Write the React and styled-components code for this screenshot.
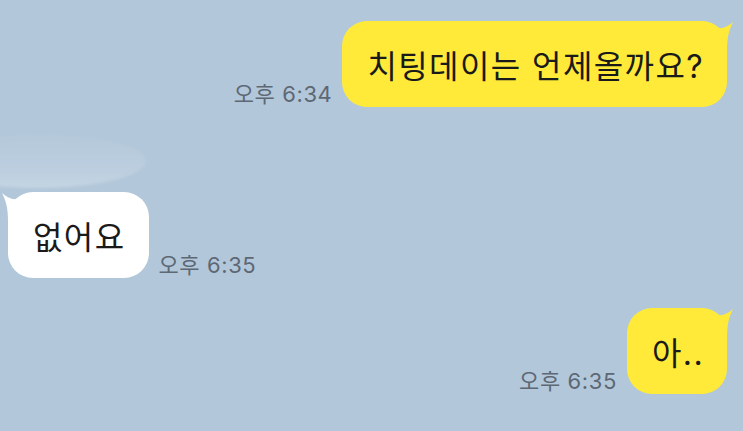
import React from "react";
import styled, { createGlobalStyle } from "styled-components";

const GlobalStyle = createGlobalStyle`
  html, body { margin: 0; padding: 0; }
  body { background: #b2c7da; }
`;

const Screen = styled.div`
  position: relative;
  width: 743px;
  height: 431px;
  overflow: hidden;
  background: #b2c7da;
  font-family: Inter, "Noto Sans CJK KR", sans-serif;
  display: flex;
  flex-direction: column;
`;

const Glare = styled.div`
  position: absolute;
  left: -70px;
  top: 134px;
  width: 216px;
  height: 54px;
  border-radius: 50%;
  background: linear-gradient(
    to bottom,
    rgba(255, 255, 255, 0.03) 0%,
    rgba(255, 255, 255, 0.12) 60%,
    rgba(255, 255, 255, 0.24) 100%
  );
  filter: blur(1.5px);
`;

const Row = styled.div`
  display: flex;
  align-items: flex-end;
  gap: 10px;
  justify-content: ${(p) => (p.$mine ? "flex-end" : "flex-start")};
  margin-top: ${(p) => p.$top}px;
  padding: ${(p) => (p.$mine ? "0 16px 0 0" : "0 0 0 8px")};
`;

const Bubble = styled.div`
  position: relative;
  height: 86px;
  padding: 0 23px 0 25px;
  display: flex;
  align-items: center;
  border-radius: 25px;
  background: ${(p) => (p.$mine ? "#ffea3a" : "#ffffff")};
  color: #1a1a1a;
  font-size: 32px;
  letter-spacing: 1.4px;
  white-space: nowrap;
`;

const Tail = styled.svg`
  position: absolute;
  top: 0;
  ${(p) => (p.$mine ? "right: -6px;" : "left: -6px; transform: scaleX(-1);")}
`;

const Time = styled.span`
  font-size: 22px;
  line-height: 1;
  letter-spacing: 0.6px;
  color: #5d6874;
  margin-bottom: 2px;
  white-space: nowrap;
`;

function BubbleTail({ mine, color }) {
  return (
    <Tail $mine={mine} width="24" height="34" viewBox="0 0 24 34">
      <path
        d="M2 4 C10 9, 16 8, 24 1 C20 9, 18 16, 18 30 L2 30 Z"
        fill={color}
      />
    </Tail>
  );
}

function Message({ mine, text, time, top }) {
  const bubble = (
    <Bubble $mine={mine}>
      <BubbleTail mine={mine} color={mine ? "#ffea3a" : "#ffffff"} />
      {text}
    </Bubble>
  );
  return (
    <Row $mine={mine} $top={top}>
      {mine ? (
        <>
          <Time>{time}</Time>
          {bubble}
        </>
      ) : (
        <>
          {bubble}
          <Time>{time}</Time>
        </>
      )}
    </Row>
  );
}

export default function App() {
  return (
    <>
      <GlobalStyle />
      <Screen>
        <Glare />
        <Message mine text="치팅데이는 언제올까요?" time="오후 6:34" top={21} />
        <Message text="없어요" time="오후 6:35" top={85} />
        <Message mine text="아.." time="오후 6:35" top={30} />
      </Screen>
    </>
  );
}
